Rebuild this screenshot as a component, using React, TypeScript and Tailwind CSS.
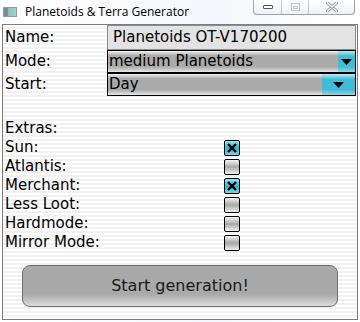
const FONT = "font-['DejaVu_Sans',sans-serif]";

const EXTRAS = [
  { label: 'Sun:', on: true },
  { label: 'Atlantis:', on: false },
  { label: 'Merchant:', on: true },
  { label: 'Less Loot:', on: false },
  { label: 'Hardmode:', on: false },
  { label: 'Mirror Mode:', on: false }
];

function Arrow() {
  return (
    <svg width="11" height="6" viewBox="0 0 11 6">
      <path d="M0 0h11L5.5 6z" fill="#000" />
    </svg>
  );
}

function Select({ value, btnW }: { value: string; btnW: string }) {
  return (
    <div className="flex h-[23px] border border-black bg-[linear-gradient(#f2f2f2,#aaaaaa_22%,#aaaaaa_75%,#e6e6e6)]">
      <span className="flex-1 pl-[1px] text-[15px] leading-[21px] text-black">{value}</span>
      <span className={`${btnW} flex items-center justify-center bg-[linear-gradient(#bfeaf3,#40bcd6_25%,#40bcd6_75%,#8fd8e8)]`}>
        <Arrow />
      </span>
    </div>
  );
}

function Check({ on }: { on: boolean }) {
  return (
    <span
      className={`flex h-[16px] w-[16px] items-center justify-center rounded-[2px] border border-black ${
        on
          ? 'bg-[linear-gradient(#9fe2f0,#30b4d0_50%,#7ed2e6)]'
          : 'bg-[linear-gradient(#f4f4f4,#a8a8a8_50%,#f0f0f0)]'
      }`}
    >
      {on && (
        <svg width="10" height="10" viewBox="0 0 10 10">
          <path d="M1 1l8 8M9 1l-8 8" stroke="#000" strokeWidth="2.4" />
        </svg>
      )}
    </span>
  );
}

export default function App() {
  return (
    <div className={`relative h-[322px] w-[360px] overflow-hidden bg-[linear-gradient(90deg,#ffffff,#f3f7fb_60%,#ffffff)] ${FONT}`}>
      {/* Title bar */}
      <div className="flex h-[24px] items-center gap-[8px] pl-[3px]">
        <span className="flex h-[10px] w-[14px] border border-[#8a9aa8] bg-[linear-gradient(90deg,#7b8c99_0%,#7b8c99_35%,#8fc0a8_35%,#9fd0e0_100%)]" />
        <span className="font-['Open_Sans',sans-serif] text-[12px] text-black">Planetoids &amp; Terra Generator</span>
      </div>

      {/* Caption buttons */}
      <div className="absolute right-[5px] top-0 flex h-[15px] overflow-hidden rounded-b-[4px] border border-t-0 border-[#9aa3ad] bg-[linear-gradient(#ffffff,#eef1f4)]">
        <span className="flex w-[28px] items-center justify-center border-r border-[#c3c8ce]">
          <span className="h-[4px] w-[10px] rounded-[1px] border border-[#4d5560] bg-white" />
        </span>
        <span className="flex w-[27px] items-center justify-center border-r border-[#c3c8ce]">
          <span className="flex h-[8px] w-[9px] items-center justify-center border border-[#c2c6cc]">
            <span className="h-[3px] w-[5px] border border-[#c2c6cc]" />
          </span>
        </span>
        <span className="flex w-[45px] items-center justify-center">
          <svg width="12" height="10" viewBox="0 0 12 10">
            <path d="M1.5 1l9 8M10.5 1l-9 8" stroke="#8a9098" strokeWidth="3" strokeLinecap="round" />
            <path d="M1.5 1l9 8M10.5 1l-9 8" stroke="#ffffff" strokeWidth="1.2" strokeLinecap="round" />
          </svg>
        </span>
      </div>

      {/* Content */}
      <div className="mx-[2px] flex h-[296px] flex-col border border-[#7d7d7d] bg-[repeating-linear-gradient(#ffffff_0px,#ffffff_2px,#f1f1f1_2px,#f1f1f1_4px)] pl-[2px] pr-[1px] text-black">
        <div className="flex h-[25px] items-center">
          <span className="w-[102px] text-[15px]">Name:</span>
          <div className="flex h-[25px] flex-1 items-center border border-[#8a8a8a] bg-[#e3e3e3] pl-[5px] text-[15px]">
            Planetoids OT-V170200
          </div>
        </div>
        <div className="flex items-center">
          <span className="w-[102px] text-[15px]">Mode:</span>
          <div className="flex-1">
            <Select value="medium Planetoids" btnW="w-[17px]" />
          </div>
        </div>
        <div className="flex items-center">
          <span className="w-[102px] text-[15px]">Start:</span>
          <div className="flex-1">
            <Select value="Day" btnW="w-[33px]" />
          </div>
        </div>

        <div className="mt-[23px] flex flex-col">
          <span className="h-[19px] text-[15px] leading-[19px]">Extras:</span>
          {EXTRAS.map(e => (
            <div key={e.label} className="flex h-[19px] items-center">
              <span className="w-[219px] text-[15px] leading-[19px]">{e.label}</span>
              <Check on={e.on} />
            </div>
          ))}
        </div>

        <button className="ml-[17px] mt-[13px] flex h-[42px] w-[316px] items-center justify-center rounded-[8px] border border-[#6e6e6e] bg-[linear-gradient(#a9a9a9,#a9a9a9_70%,#dcdcdc)] text-[16px] text-[#1a1a1a]">
          Start generation!
        </button>
      </div>
    </div>
  );
}
